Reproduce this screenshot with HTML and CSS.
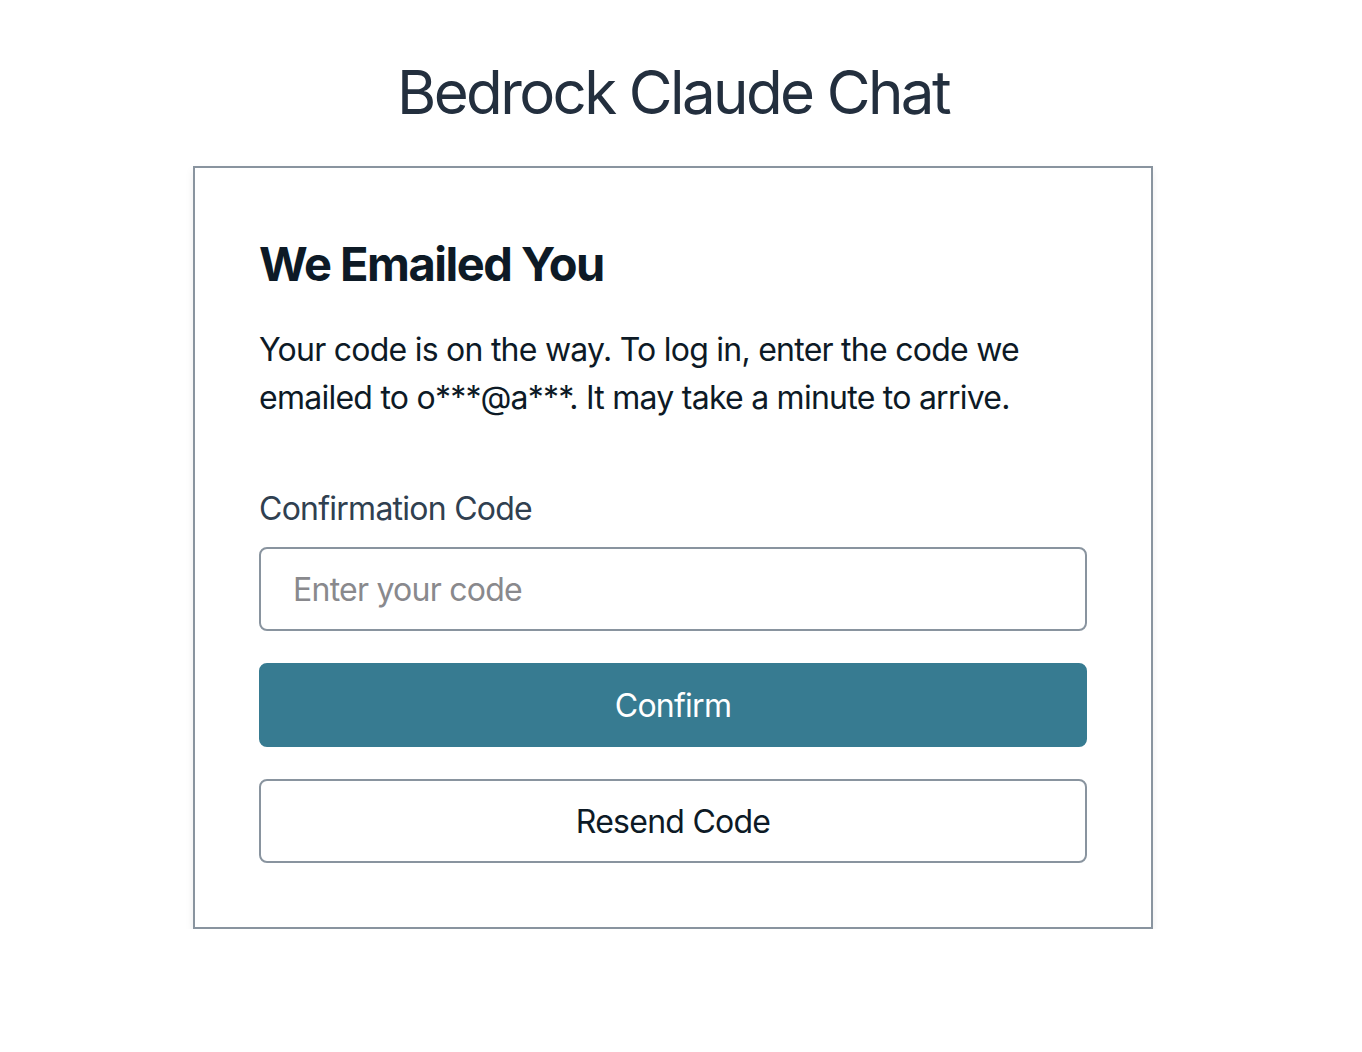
FILE: index.html
```html
<!DOCTYPE html>
<html lang="en">
<head>
<meta charset="utf-8">
<title>Bedrock Claude Chat</title>
<link rel="stylesheet" href="styles.css">
</head>
<body>
<main class="page">
  <h1 class="app-title">Bedrock Claude Chat</h1>
  <section class="card">
    <h2 class="card-heading">We Emailed You</h2>
    <p class="card-text">Your code is on the way. To log in, enter the code we emailed to o***@a***. It may take a minute to arrive.</p>
    <form class="form">
      <div class="field">
        <label class="field-label" for="code">Confirmation Code</label>
        <input class="field-input" id="code" type="text" placeholder="Enter your code">
      </div>
      <button type="button" class="btn btn-primary">Confirm</button>
      <button type="button" class="btn btn-outline">Resend Code</button>
    </form>
  </section>
</main>
</body>
</html>
```

FILE: styles.css
```css
* { box-sizing: border-box; }
html, body { margin: 0; padding: 0; background: #ffffff; }
body {
  font-family: Inter, "Noto Sans", "Liberation Sans", sans-serif;
  color: #0d1a26;
}
.page {
  display: flex;
  flex-direction: column;
  align-items: center;
  padding-top: 52px;
  padding-right: 16px;
}
.app-title {
  margin: 0;
  font-size: 60px;
  font-weight: 400;
  line-height: 80px;
  color: #232f3e;
  letter-spacing: -2.6px;
}
.card {
  margin-top: 34px;
  width: 960px;
  border: 2px solid #89949f;
  background: #fff;
  box-shadow: 0 4px 8px rgba(0,0,0,0.08);
  padding: 66px 64px 64px;
  display: flex;
  flex-direction: column;
}
.card-heading {
  margin: 0;
  font-size: 47px;
  line-height: 60px;
  font-weight: 700;
  color: #0d1a26;
  letter-spacing: -1.5px;
}
.card-text {
  margin: 32px 0 0;
  font-size: 32px;
  line-height: 48px;
  color: #0d1a26;
  letter-spacing: -0.75px;
}
.form {
  margin-top: 63px;
  display: flex;
  flex-direction: column;
}
.field {
  display: flex;
  flex-direction: column;
  gap: 14px;
}
.field-label {
  font-size: 32px;
  line-height: 48px;
  color: #304050;
  letter-spacing: -0.75px;
}
.field-input {
  height: 84px;
  border: 2px solid #89949f;
  border-radius: 8px;
  padding: 0 32px;
  font-family: inherit;
  font-size: 32px;
  color: #0d1a26;
  outline: none;
  letter-spacing: -0.75px;
}
.field-input::placeholder { color: #89898d; }
.btn {
  height: 84px;
  border-radius: 8px;
  font-family: inherit;
  font-size: 32px;
  cursor: pointer;
  letter-spacing: -0.75px;
}
.btn-primary {
  background: #377b91;
  border: 2px solid #377b91;
  color: #ffffff;
  margin-top: 32px;
}
.btn-outline {
  background: #ffffff;
  border: 2px solid #89949f;
  color: #0d1a26;
  margin-top: 32px;
}
```
